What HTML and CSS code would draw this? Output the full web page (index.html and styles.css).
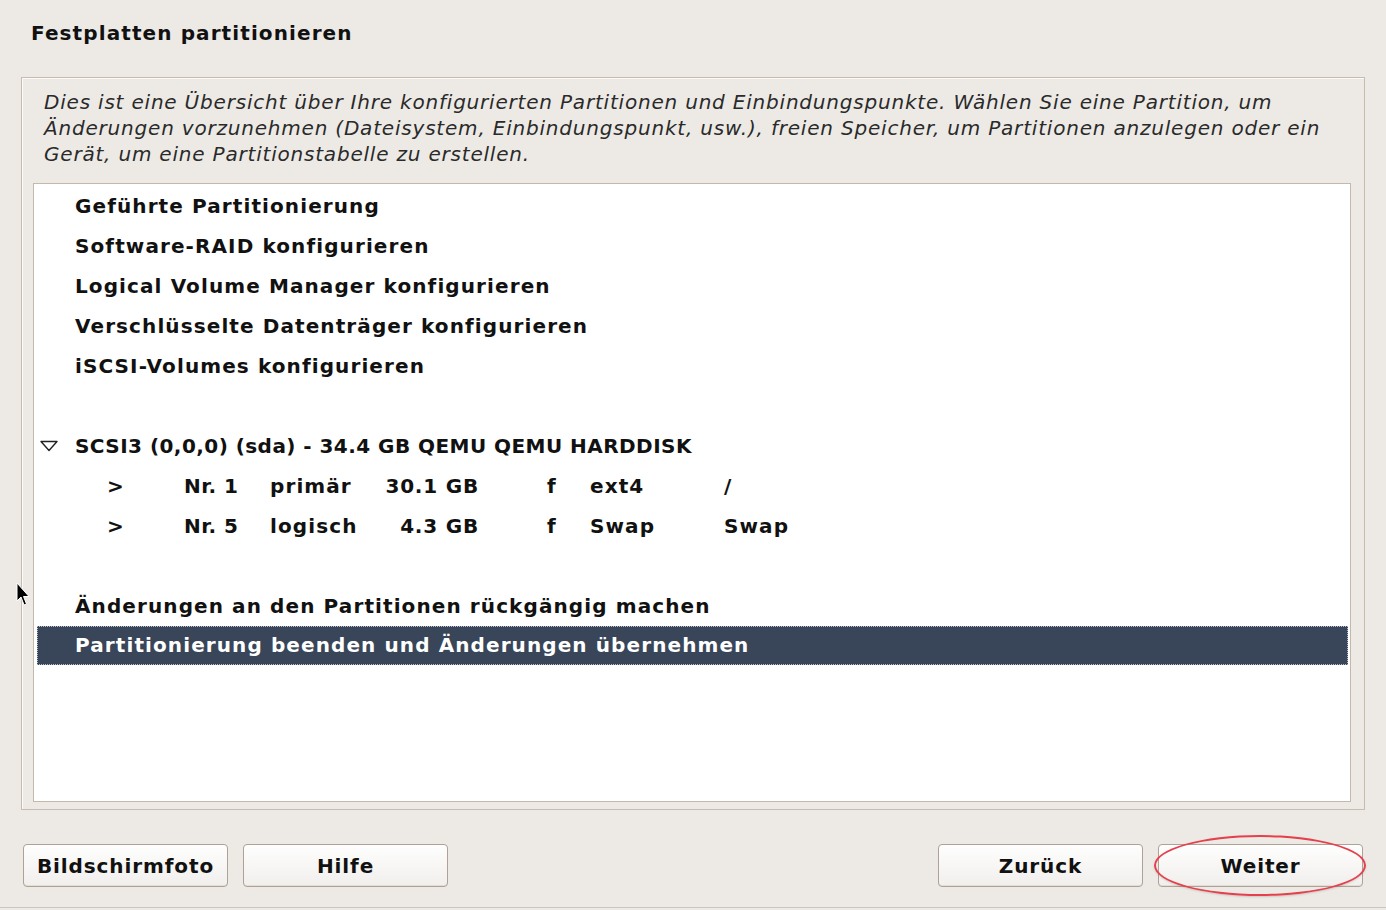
FILE: index.html
```html
<!DOCTYPE html>
<html lang="de">

<head>
    <meta charset="UTF-8">
    <title>Festplatten partitionieren</title>
    <link rel="stylesheet" href="styles.css">
</head>

<body>
    <h1 class="title">Festplatten partitionieren</h1>

    <div class="frame">
        <p class="intro">Dies ist eine Übersicht über Ihre konfigurierten Partitionen und Einbindungspunkte. Wählen Sie eine Partition, um<br>Änderungen vorzunehmen (Dateisystem, Einbindungspunkt, usw.), freien Speicher, um Partitionen anzulegen oder ein<br>Gerät, um eine Partitionstabelle zu erstellen.</p>

        <!-- Liste der Partitionierungsoptionen -->
        <div class="list">
            <div class="row">Geführte Partitionierung</div>
            <div class="row">Software-RAID konfigurieren</div>
            <div class="row">Logical Volume Manager konfigurieren</div>
            <div class="row">Verschlüsselte Datenträger konfigurieren</div>
            <div class="row">iSCSI-Volumes konfigurieren</div>
            <div class="row"></div>
            <div class="row disk">
                <svg class="expander" width="20" height="12" viewBox="0 0 20 12">
                    <path d="M2 1.5 H18 L10 10.5 Z" fill="none" stroke="#222" stroke-width="1.4" stroke-linejoin="round"/>
                </svg>
                SCSI3 (0,0,0) (sda) - 34.4 GB QEMU QEMU HARDDISK
            </div>
            <div class="row part">
                <span class="c-arrow">&gt;</span>
                <span class="c-nr">Nr. 1</span>
                <span class="c-type">primär</span>
                <span class="c-size">30.1 GB</span>
                <span class="c-flag">f</span>
                <span class="c-fs">ext4</span>
                <span class="c-mount">/</span>
            </div>
            <div class="row part">
                <span class="c-arrow">&gt;</span>
                <span class="c-nr">Nr. 5</span>
                <span class="c-type">logisch</span>
                <span class="c-size">4.3 GB</span>
                <span class="c-flag">f</span>
                <span class="c-fs">Swap</span>
                <span class="c-mount">Swap</span>
            </div>
            <div class="row"></div>
            <div class="row">Änderungen an den Partitionen rückgängig machen</div>
            <div class="row selected">Partitionierung beenden und Änderungen übernehmen</div>
        </div>
    </div>

    <div class="buttons">
        <div class="btn-group">
            <button class="btn">Bildschirmfoto</button>
            <button class="btn">Hilfe</button>
        </div>
        <div class="btn-group">
            <button class="btn">Zurück</button>
            <div class="btn-wrap">
                <button class="btn">Weiter</button>
                <span class="ring"></span>
            </div>
        </div>
    </div>

    <div class="bottom-line"></div>

    <!-- Mauszeiger -->
    <svg class="cursor" width="14" height="26" viewBox="0 0 14 26">
        <path d="M1 1 L1 19 L5 15 L8 23 L10.5 22 L7.5 14.5 L13 14.5 Z" fill="#000" stroke="#fff" stroke-width="1"/>
    </svg>
</body>

</html>
```

FILE: styles.css
```css
/* Allgemein */
body {
    margin: 0;
    padding: 0;
    background: #edeae6;
    font-family: 'DejaVu Sans', 'Liberation Sans', sans-serif;
    color: #111;
    width: 1386px;
    height: 910px;
    position: relative;
    overflow: hidden;
}

.title {
    font-size: 20px;
    font-weight: bold;
    letter-spacing: 1.1px;
    margin: 0;
    padding: 19px 31px 0;
    line-height: 28px;
    height: 58px;
    box-sizing: border-box;
}

.frame {
    margin: 19px 21px 0;
    height: 733px;
    box-sizing: border-box;
    border: 1px solid #c6bcb0;
    box-shadow: inset 1px 1px 0 #fbfaf9;
    padding: 11px 13px 7px 11px;
    display: flex;
    flex-direction: column;
}

.intro {
    margin: 0 0 16px 11px;
    font-style: italic;
    font-size: 20px;
    letter-spacing: 0.8px;
    line-height: 26px;
    color: #2a2a2a;
    white-space: nowrap;
}

.list {
    flex: 1;
    background: #fff;
    border: 1px solid #c3b8aa;
    padding: 2px 1px;
}

.row {
    height: 40px;
    line-height: 40px;
    font-size: 20px;
    font-weight: bold;
    letter-spacing: 1.1px;
    padding-left: 38px;
    margin: 0 1px 0 2px;
    white-space: nowrap;
    display: flex;
    align-items: center;
    box-sizing: border-box;
}

.disk {
    position: relative;
    letter-spacing: 0.45px;
}

.expander {
    position: absolute;
    left: 2px;
    top: 14px;
}

.part {
    padding-left: 70px;
}

.part span {
    display: inline-block;
}

.c-arrow { width: 77px; }
.c-nr { width: 86px; letter-spacing: 0.4px; }
.c-type { width: 102px; }
.c-size { width: 107px; text-align: right; margin-right: 68px; letter-spacing: 0.8px; }
.c-flag { width: 43px; }
.c-fs { width: 134px; }

.selected {
    background: #394558;
    color: #fff;
    outline: 1px dotted #b9c0cc;
    outline-offset: -1px;
    height: 39px;
    line-height: 39px;
}

/* Knöpfe */
.buttons {
    display: flex;
    justify-content: space-between;
    padding: 34px 23px 0;
}

.btn-group {
    display: flex;
    gap: 15px;
}

.btn {
    width: 205px;
    height: 43px;
    font-family: 'DejaVu Sans', sans-serif;
    font-size: 20px;
    font-weight: bold;
    letter-spacing: 0.9px;
    color: #111;
    background: linear-gradient(#fefefe, #f1efec);
    border: 1px solid #ada295;
    border-radius: 4px;
    box-shadow: inset 0 -1px 0 #e2ddd6;
    padding: 0;
}

.btn-wrap {
    position: relative;
}

.ring {
    position: absolute;
    left: -4px;
    top: -9px;
    width: 212px;
    height: 61px;
    box-sizing: border-box;
    border: 2px solid #e5404c;
    border-radius: 50%;
    box-shadow: 0 1px 2px rgba(0, 0, 0, 0.15);
}

.bottom-line {
    position: absolute;
    left: 0;
    right: 0;
    top: 907px;
    height: 1px;
    background: #c9c5bf;
}

.cursor {
    position: absolute;
    left: 16px;
    top: 582px;
}
```
